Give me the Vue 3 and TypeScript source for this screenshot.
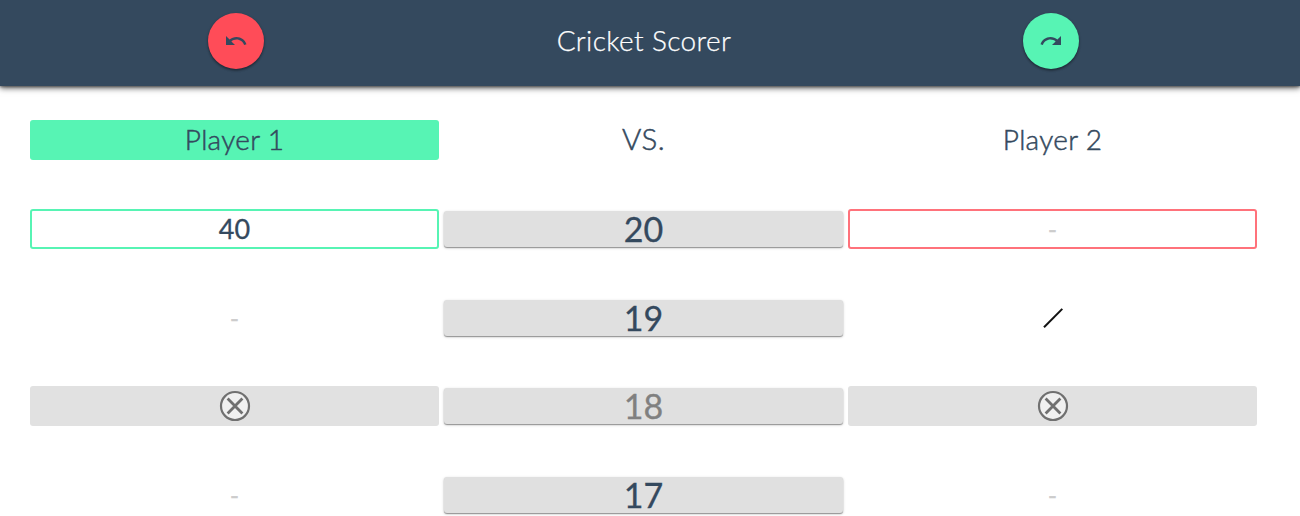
<script setup lang="ts">
type Mark = 'none' | 'single' | 'closed' | 'points'

interface Cell {
  mark: Mark
  points?: number
  outline?: 'green' | 'red'
}

interface Row {
  target: number
  done: boolean
  left: Cell
  right: Cell
}

const rows: Row[] = [
  { target: 20, done: false, left: { mark: 'points', points: 40, outline: 'green' }, right: { mark: 'none', outline: 'red' } },
  { target: 19, done: false, left: { mark: 'none' }, right: { mark: 'single' } },
  { target: 18, done: true, left: { mark: 'closed' }, right: { mark: 'closed' } },
  { target: 17, done: false, left: { mark: 'none' }, right: { mark: 'none' } },
]

const cellsOf = (row: Row) => [row.left, row.right]
</script>

<template>
  <div class="app">
    <header class="bar">
      <div class="slot">
        <button class="fab undo" aria-label="Undo">
          <svg viewBox="0 0 24 24" width="24" height="24">
            <path d="M12.5 8c-2.65 0-5.05.99-6.9 2.6L2 7v9h9l-3.62-3.62c1.39-1.16 3.16-1.88 5.12-1.88 3.54 0 6.55 2.31 7.6 5.5l2.37-.78C21.08 11.03 17.15 8 12.5 8z" />
          </svg>
        </button>
      </div>
      <h1 class="title"><span>Cricket Scorer</span></h1>
      <div class="slot">
        <button class="fab redo" aria-label="Redo">
          <svg viewBox="0 0 24 24" width="24" height="24">
            <path d="M18.4 10.6C16.55 8.99 14.15 8 11.5 8c-4.65 0-8.58 3.03-9.96 7.22L3.9 16c1.05-3.19 4.05-5.5 7.6-5.5 1.95 0 3.73.72 5.12 1.88L13 16h9V7l-3.6 3.6z" />
          </svg>
        </button>
      </div>
    </header>

    <main class="board">
      <div class="row">
        <div class="cell name active"><span>Player 1</span></div>
        <div class="cell versus"><span>VS.</span></div>
        <div class="cell name"><span>Player 2</span></div>
      </div>
      <div v-for="row in rows" :key="row.target" class="row">
        <div
          v-for="(cell, i) in cellsOf(row)"
          :key="i"
          class="cell score"
          :class="[cell.mark, cell.outline, i === 0 ? 'first' : 'last']"
        >
          <span v-if="cell.mark === 'points'" class="count">{{ cell.points }}</span>
          <span v-else-if="cell.mark === 'none'" class="dash">-</span>
          <svg v-else-if="cell.mark === 'single'" class="mark" viewBox="0 0 32 32" width="32" height="32">
            <path d="M7 25.2 25.3 6.9" stroke="#111" stroke-width="2" />
          </svg>
          <svg v-else class="mark" viewBox="0 0 32 32" width="32" height="32">
            <circle cx="16" cy="16" r="14" fill="#f0f0f0" stroke="#707070" stroke-width="2.2" />
            <path d="M8.6 8.6 23.4 23.4M23.4 8.6 8.6 23.4" stroke="#707070" stroke-width="2.8" />
          </svg>
        </div>
        <div class="cell middle">
          <button class="target" :class="{ done: row.done }"><span>{{ row.target }}</span></button>
        </div>
      </div>
    </main>
  </div>
</template>

<style>
html,
body {
  margin: 0;
  overflow: hidden;
}
</style>

<style scoped>
.app {
  height: 516px;
  overflow: hidden;
  background: #fff;
  color: #34495e;
  font-family: Lato, "Liberation Sans", sans-serif;
}

button {
  border: 0;
  padding: 0;
  color: inherit;
  font-family: inherit;
}

.bar {
  display: grid;
  grid-template-columns: 410px 406px 407px;
  box-sizing: border-box;
  height: 86px;
  padding: 13px 0 0 31px;
  background: #34495e;
  box-shadow: 0 2px 6px rgba(0, 0, 0, 0.65), 0 1px 2px rgba(0, 0, 0, 0.35);
}

.slot {
  display: flex;
  justify-content: center;
}

.fab {
  display: flex;
  align-items: center;
  justify-content: center;
  width: 56px;
  height: 56px;
  border-radius: 50%;
  box-shadow: 0 1px 3px rgba(0, 0, 0, 0.3), 0 2px 2px rgba(0, 0, 0, 0.2);
}

.fab svg {
  fill: #34495e;
}

.undo {
  background: #ff4c58;
}

.redo {
  background: #57f4b4;
}

.title {
  margin: 0;
  height: 54px;
  color: #fff;
  font-size: 28px;
  font-weight: 300;
  letter-spacing: 0.38px;
  line-height: 54px;
  text-align: center;
  -webkit-text-stroke: 0.25px #fff;
}

.board {
  display: flex;
  flex-direction: column;
  gap: 48.67px;
  padding: 34.33px 0 0 30px;
}

.row {
  display: grid;
  flex: none;
  grid-template-columns: repeat(3, 409px);
  height: 40px;
}

.cell {
  display: flex;
  grid-row: 1;
  align-items: center;
  justify-content: center;
  box-sizing: border-box;
  height: 40px;
  border-radius: 3px;
}

.first {
  grid-column: 1;
}

.middle {
  grid-column: 2;
}

.last {
  grid-column: 3;
}

.name,
.versus {
  padding-bottom: 2px;
  font-size: 28px;
  font-weight: 300;
  line-height: 38px;
  -webkit-text-stroke: 0.5px #34495e;
}

.name {
  letter-spacing: 0.3px;
}

.versus {
  padding-bottom: 3px;
  font-size: 29.5px;
  letter-spacing: 0.5px;
}

.active {
  background: #57f4b4;
}

.count {
  line-height: 36px;
  font-size: 27px;
  -webkit-text-stroke: 0.3px #34495e;
}

.dash {
  color: #ccc;
  font-size: 24px;
  line-height: 36px;
  -webkit-text-stroke: 0.5px #ccc;
}

.green {
  border: 2px solid #57f4b4;
}

.red {
  border: 2px solid #ff727b;
}

.closed {
  background: #e1e1e1;
}

.mark {
  fill: none;
}

.target {
  width: 399px;
  height: 36px;
  border-radius: 3px;
  background: #e0e0e0;
  box-shadow: 0 1px 1px rgba(0, 0, 0, 0.32), 0 1px 3px rgba(0, 0, 0, 0.22);
  font-size: 34px;
  line-height: 36px;
  -webkit-text-stroke: 0.3px currentColor;
}

.done {
  color: #808080;
}
</style>
